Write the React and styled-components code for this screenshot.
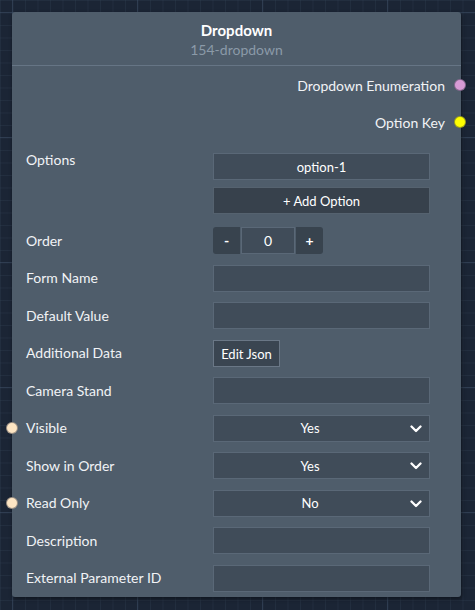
import React from "react";
import styled, { createGlobalStyle } from "styled-components";

const Global = createGlobalStyle`
  html, body { margin: 0; padding: 0; }
  body {
    width: 475px;
    height: 610px;
    overflow: hidden;
    font-family: "Lato", "Noto Sans", sans-serif;
    background-color: #1b2535;
    background-image:
      linear-gradient(to right, rgba(70,90,115,0.4) 1px, transparent 1px),
      linear-gradient(to bottom, rgba(70,90,115,0.4) 1px, transparent 1px),
      linear-gradient(to right, rgba(60,78,100,0.22) 1px, transparent 1px),
      linear-gradient(to bottom, rgba(60,78,100,0.22) 1px, transparent 1px);
    background-size: 125px 125px, 125px 125px, 12.5px 12.5px, 12.5px 12.5px;
    background-position: 12px 12px, 12px 12px, 0 0, 0 0;
  }
`;

const Canvas = styled.div`
  padding: 12px 0 0 12px;
`;

const Node = styled.div`
  position: relative;
  width: 449px;
  height: 585px;
  box-sizing: border-box;
  background: #4f5d6b;
  border-radius: 3px;
  box-shadow: 1px 2px 4px rgba(0, 0, 0, 0.45);
  color: #f1f3f6;
`;

const Header = styled.div`
  padding: 8px 0 5px;
  border-bottom: 1px solid #667585;
  text-align: center;
`;

const Title = styled.div`
  font-weight: 700;
  font-size: 15px;
  line-height: 20px;
  color: #ffffff;
`;

const Subtitle = styled.div`
  font-size: 14px;
  line-height: 20px;
  color: #8b9aa8;
`;

const Outputs = styled.div`
  display: flex;
  flex-direction: column;
  padding-top: 0.5px;
`;

const OutputRow = styled.div`
  position: relative;
  height: 37px;
  display: flex;
  align-items: center;
  justify-content: flex-end;
  padding-right: 16px;
  font-size: 14px;
`;

const Handle = styled.span`
  position: absolute;
  top: 50%;
  width: 12px;
  height: 12px;
  margin-top: -6px;
  border-radius: 50%;
  box-sizing: border-box;
  background: ${(p) => p.$color};
  border: 1px solid rgba(40, 45, 60, 0.45);
  ${(p) => (p.$side === "right" ? "right: -5px;" : "left: -20px;")}
`;

const Body = styled.div`
  padding: 12.5px 31px 0 14px;
  display: flex;
  flex-direction: column;
  gap: 10.5px;
`;

const Row = styled.div`
  position: relative;
  display: grid;
  grid-template-columns: 187px 217px;
  align-items: ${(p) => (p.$top ? "start" : "center")};
  ${(p) => (p.$extra ? "margin-bottom: 2.5px;" : "")}
`;

const Label = styled.div`
  font-size: 14px;
  line-height: 20px;
  color: #f1f3f6;
  ${(p) => (p.$top ? "margin-top: -3px;" : "")}
`;

const Stack = styled.div`
  display: flex;
  flex-direction: column;
  gap: 7px;
`;

const Field = styled.div`
  height: 27px;
  box-sizing: border-box;
  background: #404c59;
  border: 1px solid #5a6877;
  display: flex;
  align-items: center;
  justify-content: center;
  font-size: 13px;
  color: #ffffff;
`;

const WideButton = styled.div`
  height: 27px;
  box-sizing: border-box;
  background: #37414c;
  border: 1px solid #55626f;
  display: flex;
  align-items: center;
  justify-content: center;
  font-size: 13px;
  color: #ffffff;
`;

const Stepper = styled.div`
  display: flex;
  height: 27px;
`;

const StepButton = styled.div`
  width: 27px;
  height: 27px;
  background: #38434e;
  display: flex;
  align-items: center;
  justify-content: center;
  font-size: 14px;
  font-weight: 700;
  color: #ffffff;
  border-radius: ${(p) => (p.$left ? "3px 0 0 3px" : "0 3px 3px 0")};
`;

const StepValue = styled.div`
  width: 54px;
  height: 27px;
  box-sizing: border-box;
  margin: 0 1px;
  background: #404c59;
  border: 1px solid #5a6877;
  display: flex;
  align-items: center;
  justify-content: center;
  font-size: 14px;
  color: #ffffff;
`;

const JsonButton = styled.div`
  width: 67px;
  height: 27px;
  box-sizing: border-box;
  background: #3a4551;
  border: 1px solid #6a7786;
  display: flex;
  align-items: center;
  justify-content: center;
  padding-top: 2px;
  font-size: 13px;
  color: #ffffff;
`;

const Select = styled.div`
  height: 27px;
  box-sizing: border-box;
  background: #404c59;
  border: 1px solid #5a6877;
  display: flex;
  align-items: center;
  font-size: 13px;
  color: #ffffff;
`;

const SelectValue = styled.span`
  flex: 1;
  text-align: center;
  padding-left: 1px;
`;

const Chevron = styled.svg`
  width: 12px;
  height: 8px;
  margin: 1px 7px 0 5px;
`;

const ChevronIcon = () => (
  <Chevron viewBox="0 0 12 8">
    <path
      d="M1.5 1.5 L6 6 L10.5 1.5"
      fill="none"
      stroke="#ffffff"
      strokeWidth="2.3"
      strokeLinecap="round"
      strokeLinejoin="round"
    />
  </Chevron>
);

const HANDLE = "#fde5c3";

export default function App() {
  return (
    <>
      <Global />
      <Canvas>
        <Node>
          <Header>
            <Title>Dropdown</Title>
            <Subtitle>154-dropdown</Subtitle>
          </Header>
          <Outputs>
            <OutputRow>
              Dropdown Enumeration
              <Handle $side="right" $color="#d89bd6" />
            </OutputRow>
            <OutputRow>
              Option Key
              <Handle $side="right" $color="#ffff00" />
            </OutputRow>
          </Outputs>
          <Body>
            <Row $top $extra>
              <Label $top>Options</Label>
              <Stack>
                <Field>option-1</Field>
                <WideButton>+ Add Option</WideButton>
              </Stack>
            </Row>
            <Row>
              <Label>Order</Label>
              <Stepper>
                <StepButton $left>-</StepButton>
                <StepValue>0</StepValue>
                <StepButton>+</StepButton>
              </Stepper>
            </Row>
            <Row>
              <Label>Form Name</Label>
              <Field />
            </Row>
            <Row>
              <Label>Default Value</Label>
              <Field />
            </Row>
            <Row>
              <Label>Additional Data</Label>
              <JsonButton>Edit Json</JsonButton>
            </Row>
            <Row>
              <Label>Camera Stand</Label>
              <Field />
            </Row>
            <Row>
              <Handle $side="left" $color={HANDLE} />
              <Label>Visible</Label>
              <Select>
                <SelectValue>Yes</SelectValue>
                <ChevronIcon />
              </Select>
            </Row>
            <Row>
              <Label>Show in Order</Label>
              <Select>
                <SelectValue>Yes</SelectValue>
                <ChevronIcon />
              </Select>
            </Row>
            <Row>
              <Handle $side="left" $color={HANDLE} />
              <Label>Read Only</Label>
              <Select>
                <SelectValue>No</SelectValue>
                <ChevronIcon />
              </Select>
            </Row>
            <Row>
              <Label>Description</Label>
              <Field />
            </Row>
            <Row>
              <Label>External Parameter ID</Label>
              <Field />
            </Row>
          </Body>
        </Node>
      </Canvas>
    </>
  );
}
